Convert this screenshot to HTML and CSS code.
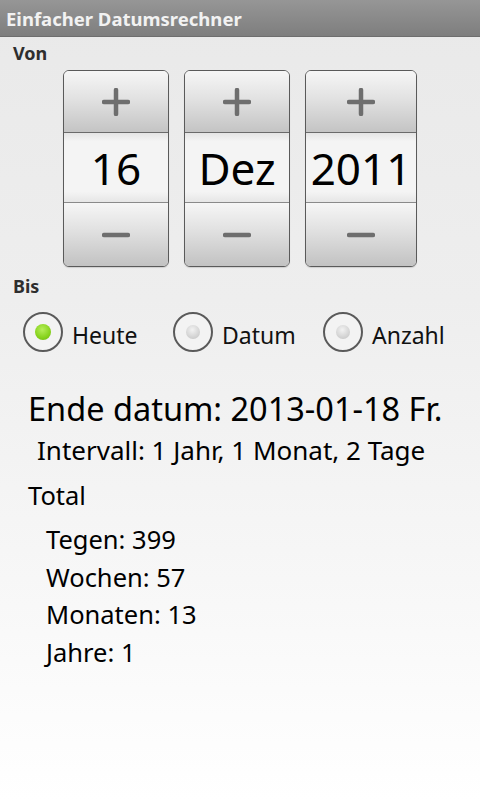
FILE: index.html
```html
<!DOCTYPE html>
<html lang="de">
<head>
    <meta charset="UTF-8">
    <title>Einfacher Datumsrechner</title>
    <link rel="stylesheet" href="styles.css">
</head>
<body>
    <div class="titlebar">Einfacher Datumsrechner</div>

    <div class="section-label">Von</div>
    <div class="pickers">
        <div class="picker">
            <div class="pick-btn pick-up"><svg width="28" height="28" viewBox="0 0 28 28"><path d="M14 2v24M2 14h24" /></svg></div>
            <div class="pick-value">16</div>
            <div class="pick-btn pick-down"><svg width="28" height="28" viewBox="0 0 28 28"><path d="M2 14h24" /></svg></div>
        </div>
        <div class="picker">
            <div class="pick-btn pick-up"><svg width="28" height="28" viewBox="0 0 28 28"><path d="M14 2v24M2 14h24" /></svg></div>
            <div class="pick-value">Dez</div>
            <div class="pick-btn pick-down"><svg width="28" height="28" viewBox="0 0 28 28"><path d="M2 14h24" /></svg></div>
        </div>
        <div class="picker picker-year">
            <div class="pick-btn pick-up"><svg width="28" height="28" viewBox="0 0 28 28"><path d="M14 2v24M2 14h24" /></svg></div>
            <div class="pick-value">2011</div>
            <div class="pick-btn pick-down"><svg width="28" height="28" viewBox="0 0 28 28"><path d="M2 14h24" /></svg></div>
        </div>
    </div>

    <div class="section-label bis">Bis</div>
    <div class="radios">
        <label class="radio"><span class="radio-circle checked"><span class="dot"></span></span><span class="radio-text">Heute</span></label>
        <label class="radio"><span class="radio-circle"><span class="dot"></span></span><span class="radio-text">Datum</span></label>
        <label class="radio"><span class="radio-circle"><span class="dot"></span></span><span class="radio-text">Anzahl</span></label>
    </div>

    <div class="result">
        <div class="end-date">Ende datum: 2013-01-18 Fr.</div>
        <div class="interval">Intervall: 1 Jahr, 1 Monat, 2 Tage</div>
        <div class="total">Total</div>
        <ul class="totals">
            <li>Tegen: 399</li>
            <li>Wochen: 57</li>
            <li>Monaten: 13</li>
            <li>Jahre: 1</li>
        </ul>
    </div>
</body>
</html>
```

FILE: styles.css
```css
html { height: 100%; }
body { margin: 0; min-height: 100%; font-family: "Noto Sans", "Open Sans", sans-serif; color: #000; background: linear-gradient(#e9e9e9 0px, #eeeeee 300px, #f6f6f6 550px, #ffffff 800px); }

.titlebar { height: 36px; line-height: 37px; padding-left: 6px; font-size: 18.5px; font-weight: bold; color: #f2f2f2; background: linear-gradient(#969696, #7e7e7e); border-bottom: 1px solid #6e6e6e; }

.section-label { margin: 5px 0 0 13px; font-size: 18px; font-weight: bold; color: #2e2e2e; line-height: 22px; }
.bis { margin-top: 8px; }

.pickers { display: flex; gap: 15px; margin: 6px 0 0 63px; }
.picker { width: 104px; height: 195px; border: 1px solid #5a5a5a; border-radius: 6px; overflow: hidden; display: flex; flex-direction: column; box-shadow: 0 1px 1px #0002; }
.picker-year { width: 110px; }

.pick-btn { display: flex; align-items: center; justify-content: center; }
.pick-btn svg path { stroke: #6e6e6e; stroke-width: 4.5; stroke-linecap: round; fill: none; }
.pick-up { height: 61px; background: linear-gradient(#f6f6f6, #e2e2e2 45%, #c4c4c4); border-bottom: 1px solid #6a6a6a; }
.pick-down { height: 63px; background: linear-gradient(#f6f6f6, #e0e0e0 45%, #c2c2c2); border-top: 1px solid #8a8a8a; }

.pick-value { flex: 1; display: flex; align-items: center; justify-content: center; font-size: 44px; color: #000; background: linear-gradient(#e4e4e4, #f4f4f4 12%, #f4f4f4 85%, #e6e6e6); }

.radios { display: flex; margin: 15px 0 0 23px; }
.radio { width: 150px; display: flex; align-items: center; gap: 9px; font-size: 23px; color: #111; }
.radio-text { padding-top: 5px; }
.radio-circle { width: 36px; height: 36px; border: 2px solid #5a5a5a; border-radius: 50%; background: #f3f3f3; display: flex; align-items: center; justify-content: center; }
.dot { width: 14px; height: 14px; border-radius: 50%; background: radial-gradient(circle at 45% 35%, #f2f2f2, #cfcfcf 70%, #b8b8b8); }
.checked .dot { width: 16px; height: 16px; background: radial-gradient(circle at 45% 35%, #b6ee5a, #86d21c 60%, #6ab012); }

.result { margin-top: 36px; }
.end-date { margin-left: 28px; font-size: 32.5px; line-height: 42px; }
.interval { margin-left: 37px; font-size: 26px; line-height: 40px; }
.total { margin: 5px 0 0 28px; font-size: 25.5px; line-height: 40px; }
.totals { list-style: none; margin: 6px 0 0 46px; padding: 0; font-size: 25.5px; }
.totals li { line-height: 37.5px; }
```
